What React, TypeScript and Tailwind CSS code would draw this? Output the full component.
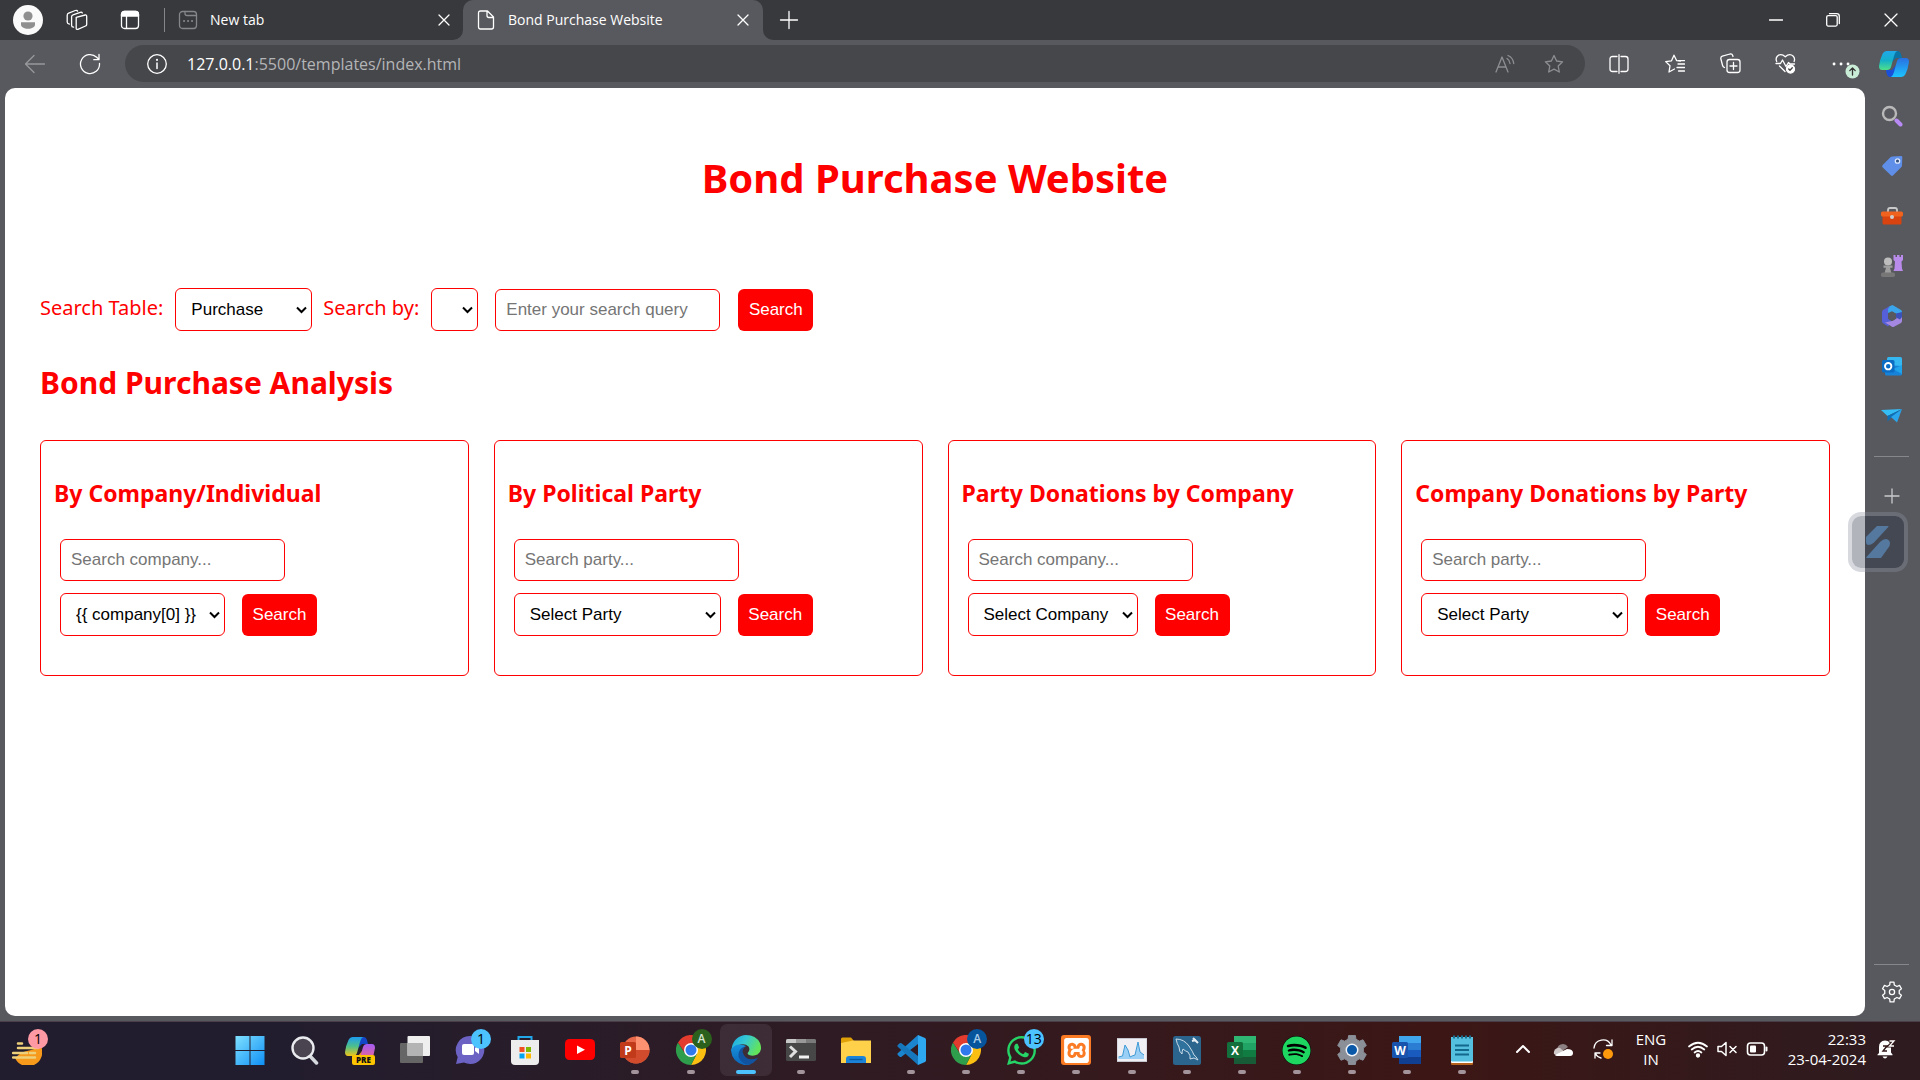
import type { ReactNode } from "react";
import { FaWhatsapp, FaSpotify } from "react-icons/fa";
import { SiXampp } from "react-icons/si";

const UI = "font-['Open_Sans','Noto_Sans',sans-serif]";
const PAGE = "font-['Noto_Sans',sans-serif]";
const CONTROL = "font-['Liberation_Sans',Arial,sans-serif] text-[17px]";

type IconProps = { size?: number; box?: string; children: ReactNode; className?: string };

function Svg({ size = 20, box = "0 0 20 20", children, className = "" }: IconProps) {
  return (
    <svg
      width={size}
      height={size}
      viewBox={box}
      fill="none"
      stroke="currentColor"
      strokeWidth="1.3"
      strokeLinecap="round"
      strokeLinejoin="round"
      className={`shrink-0 ${className}`}
      aria-hidden="true"
    >
      {children}
    </svg>
  );
}

function Flat({ size = 30, box = "0 0 30 30", children }: IconProps) {
  return (
    <svg width={size} height={size} viewBox={box} className="shrink-0" aria-hidden="true">
      {children}
    </svg>
  );
}

function gearPath(c: number, outer: number, inner: number, teeth: number, wide: number) {
  const step = (Math.PI * 2) / teeth;
  const points: string[] = [];
  for (let i = 0; i < teeth; i++) {
    const a = i * step - Math.PI / 2;
    const corners: [number, number][] = [
      [a - step * wide, inner],
      [a - step * wide * 0.62, outer],
      [a + step * wide * 0.62, outer],
      [a + step * wide, inner],
    ];
    corners.forEach(([t, r]) => points.push(`${(c + r * Math.cos(t)).toFixed(2)} ${(c + r * Math.sin(t)).toFixed(2)}`));
  }
  return `M${points.join("L")}Z`;
}

/* ---------- Title bar ---------- */

function CloseGlyph() {
  return (
    <Svg size={12} box="0 0 12 12">
      <path d="M1 1l10 10M11 1L1 11" />
    </Svg>
  );
}

function TitleBar() {
  return (
    <header className={`flex h-10 shrink-0 text-white ${UI}`}>
      <div className="flex w-[463px] shrink-0 items-center rounded-br-[10px] bg-[#38393d]">
        <button aria-label="Profile" className="flex w-14 justify-center">
          <Flat>
            <circle cx="15" cy="15" r="15" fill="#fafafa" />
            <circle cx="15" cy="11" r="4.6" fill="#8f8f8f" />
            <path d="M8 17.2h14v2.3c0 2.6-3 4.2-7 4.2s-7-1.6-7-4.2z" fill="#8f8f8f" />
          </Flat>
        </button>
        <button aria-label="Workspaces" className="flex w-[42px] justify-center">
          <Svg size={22} box="0 0 22 22">
            <path d="M10.200 8.300l9-2.300q1.500-.3 1.500 1.200v8.200q0 1.200-1.200 1.600l-7.600 3.300q-1.700.6-1.700-1.100z" />
            <path d="M7.600 18.200q-2-.3-2-1.800V7.800q0-1.500 1.400-1.900l7.300-2.600q1.500-.5 2 .7" />
            <path d="M3.400 15.200Q1.200 14.600 1.200 13V6.400q0-1.600 1.500-2.200l6.600-2.700q1.700-.6 2.300.6" />
          </Svg>
        </button>
        <button aria-label="Tab actions" className="flex w-16 justify-center">
          <Svg>
            <rect x="1.500" y="1.500" width="17" height="17" rx="3" />
            <path d="M1.500 6V4.500q0-3 3-3h11q3 0 3 3V6z" fill="currentColor" />
            <path d="M6.500 6v12" />
          </Svg>
        </button>
        <span className="mx-0.5 h-6 w-px bg-[#85868a]" />
        <div className="flex flex-1 items-center pr-[11px] pl-[11px]">
          <Svg size={20} className="text-[#85868a]">
            <rect x="1.500" y="1.500" width="17" height="17" rx="3" />
            <path d="M7 1.500v2q0 2 2 2h9.500" />
            <path d="M6 11h.1M10 11h.1M14 11h.1" strokeWidth="2" />
          </Svg>
          <span className="ml-3 flex-1 text-sm leading-5">New tab</span>
          <button aria-label="Close New tab" className="p-0.5">
            <CloseGlyph />
          </button>
        </div>
      </div>
      <div className="w-[300px] shrink-0 bg-[#38393d]">
        <div className="flex h-full items-center rounded-t-[10px] bg-[#58595e] pr-3 pl-[13px]">
          <Svg size={20}>
            <path d="M2.500 3q0-2 2-2h7l6 6v10q0 2-2 2h-11q-2 0-2-2zM11 1v4.500q0 2 2 2h4.500" />
          </Svg>
          <span className="ml-3 flex-1 text-sm leading-5">Bond Purchase Website</span>
          <button aria-label="Close Bond Purchase Website" className="p-0.5">
            <CloseGlyph />
          </button>
        </div>
      </div>
      <div className="flex flex-1 items-center justify-between rounded-bl-[10px] bg-[#38393d] pl-4">
        <button aria-label="Open new tab">
          <Svg size={20}>
            <path d="M10 1.500v17M1.500 10h17" />
          </Svg>
        </button>
        <div className="flex">
          <button aria-label="Minimize" className="flex w-14 justify-center">
            <Svg size={14} box="0 0 14 14">
              <path d="M.5 7h13" />
            </Svg>
          </button>
          <button aria-label="Restore" className="flex w-[58px] justify-center">
            <Svg size={14} box="0 0 14 14">
              <rect x=".7" y="2.600" width="10.500" height="10.500" rx="1.500" />
              <path d="M3.500.7h7.300q2.500 0 2.500 2.500v7.300" />
            </Svg>
          </button>
          <button aria-label="Close window" className="flex w-[58px] justify-center">
            <Svg size={14} box="0 0 14 14">
              <path d="M1 1l12 12M13 1L1 13" />
            </Svg>
          </button>
        </div>
      </div>
    </header>
  );
}

/* ---------- Toolbar ---------- */

function Copilot({ pre = false }: { pre?: boolean }) {
  const id = pre ? "pre" : "bar";
  return (
    <Flat>
      <defs>
        <linearGradient id={`${id}-a`} x1="0" y1="0" x2="0" y2="1">
          <stop offset="0" stopColor={pre ? "#1b9df0" : "#20a8ea"} />
          <stop offset=".5" stopColor={pre ? "#4fc08a" : "#15b0c8"} />
          <stop offset="1" stopColor={pre ? "#f0c419" : "#4fe08a"} />
        </linearGradient>
        <linearGradient id={`${id}-b`} x1="0" y1="0" x2="0" y2="1">
          <stop offset="0" stopColor={pre ? "#a35cf5" : "#2a6fe0"} />
          <stop offset="1" stopColor={pre ? "#ff6a78" : "#1cc4ff"} />
        </linearGradient>
      </defs>
      <path d="M14 2h5q2 0 3 3l1 4h-6l-4 4z" fill={pre ? "#1446c8" : "#0a74a6"} />
      <path d="M16 28h-5q-2.500 0-3.500-4L7 21h6l4-5z" fill={pre ? "#f78b2c" : "#1a50d8"} />
      <path d="M8 2h10q-2 1-3 5l-3 11q-1 3-4 3H3q-3 0-3-4 1-7 3.500-12Q5 2 8 2z" fill={`url(#${id}-a)`} />
      <path d="M22 28H12q2-1 3-5l3-11q1-3 4-3h5q3 0 3 4-1 7-3.500 12Q25 28 22 28z" fill={`url(#${id}-b)`} />
      {pre && (
        <>
          <rect x="7" y="20" width="23" height="10" rx="2" fill="#fdc500" />
          <text x="18.500" y="28" textAnchor="middle" fontSize="8" fontWeight="800" fontFamily="Open Sans" fill="#111">
            PRE
          </text>
        </>
      )}
    </Flat>
  );
}

const STAR = "M10 1.500l2.600 5.500 6 .8-4.400 4.200 1.100 6-5.300-2.900-5.300 2.900 1.100-6L1.400 7.800l6-.8z";

function Toolbar() {
  return (
    <div className={`flex shrink-0 items-start pt-[5px] pb-1.5 text-white ${UI}`}>
      <div className="flex h-[37px] w-[125px] shrink-0 items-center pl-6">
        <button aria-label="Back" className="text-[#97989b]">
          <Svg size={22} box="0 0 22 22">
            <path d="M20.500 11H2M10 2.500L1.500 11l8.500 8.500" />
          </Svg>
        </button>
        <button aria-label="Refresh" className="ml-[33px]">
          <Svg size={22} box="0 0 22 22">
            <path d="M20.500 10.500A9.500 9.500 0 1 1 17.700 4.300l2.300 2.300M20 1.500v5.200h-5.200" />
          </Svg>
        </button>
      </div>
      <div className="flex h-[37px] flex-1 items-center rounded-full bg-[#46474b] pr-[21px] pl-[22px]">
        <button aria-label="Site information">
          <Svg size={20}>
            <circle cx="10" cy="10" r="9.300" />
            <path d="M10 9v5.500" strokeWidth="1.500" />
            <path d="M10 5.800v.1" strokeWidth="2" />
          </Svg>
        </button>
        <div className="ml-5 flex-1 text-base leading-6">
          <span className="text-white">127.0.0.1</span>
          <span className="text-[#b4b5b7]">:5500/templates/index.html</span>
        </div>
        <div className="flex items-center gap-[29px] text-[#8e8f92]">
          <button aria-label="Read aloud">
            <Svg size={20}>
              <path d="M1 18L7 3l6 15M3 13h8M12 4.500q2.500 1.500 3 5M13 1.500q5 2 5.700 8" />
            </Svg>
          </button>
          <button aria-label="Add to favorites">
            <Svg size={20}>
              <path d={STAR} />
            </Svg>
          </button>
        </div>
      </div>
      <div className="flex h-[37px] w-[335px] shrink-0 items-center pl-1.5">
        <button aria-label="Split screen" className="flex w-14 justify-center">
          <Svg size={20}>
            <path d="M8 2.500H3.500q-2.500 0-2.500 2.500v10q0 2.500 2.500 2.500H8M12 2.500h4.500Q19 2.500 19 5v10q0 2.500-2.500 2.500H12M10 .7v18.600" />
          </Svg>
        </button>
        <button aria-label="Favorites" className="flex w-14 justify-center">
          <Svg size={20}>
            <path d="M15.500 7L11.700 6.700 9 1.200 6.500 6.800.7 7.600 5 11.800l-1 6.200 5.500-3M13 10h6.500M12 13.500h7.500M13 6.600h6.500M13.500 17h6" />
          </Svg>
        </button>
        <button aria-label="Collections" className="flex w-[55px] justify-center">
          <Svg size={21} box="0 0 21 21">
            <rect x="7" y="6.500" width="13" height="13" rx="2.500" />
            <path d="M13.500 9.500v7M10 13h7M4.500 14.500Q3 14 2.600 12.500L.9 6Q.4 4 2.300 3.200L10 1q2-.5 2.600 1.300l.4 1.200" />
          </Svg>
        </button>
        <button aria-label="Browser essentials" className="flex w-[55px] justify-center">
          <Svg size={21} box="0 0 21 21">
            <path d="M1.700 8.500Q.3 5.500 2.300 3.200q3.700-3.500 8 .5 4.300-4 8-.5 2 2.300.8 5.300M1 10.500h4.500l2-3.500 3.500 6.500 2.500-4 1.500 1.500h4.500M4.500 13l5.500 5.500" />
            <circle cx="15.500" cy="16" r="4" fill="currentColor" />
            <path d="M13.700 16l1.300 1.300 2.300-2.500" stroke="#444" />
          </Svg>
        </button>
        <button aria-label="Settings and more, update available" className="relative flex w-[55px] justify-center">
          <Svg size={20}>
            <path d="M3 10h.1M10 10h.1M17 10h.1" strokeWidth="2.800" />
          </Svg>
          <span className="absolute top-2.5 left-8">
            <Svg size={15} box="0 0 15 15">
              <circle cx="7.500" cy="7.500" r="7" fill="#c9ecd7" stroke="none" />
              <path d="M7.500 11V4M4.800 6.600L7.500 4l2.700 2.600" stroke="#333" />
            </Svg>
          </span>
        </button>
        <button aria-label="Copilot" className="flex w-[52px] justify-center">
          <Copilot />
        </button>
      </div>
    </div>
  );
}

/* ---------- Web page ---------- */

function SearchButton() {
  return (
    <button className={`h-[42px] w-[75px] rounded-md bg-[#ff0000] text-white ${CONTROL}`}>Search</button>
  );
}

function Select({ id, width, options, label }: { id: string; width: string; options: string[]; label?: string }) {
  return (
    <span className={`relative inline-flex ${width}`}>
      <select
        id={id}
        aria-label={label}
        className={`h-[43px] w-full appearance-none rounded-md border border-[#ff0000] bg-white pl-[15px] text-black ${CONTROL}`}
      >
        {options.map((o) => (
          <option key={o}>{o}</option>
        ))}
      </select>
      <svg width="11" height="8" viewBox="0 0 11 8" className="pointer-events-none absolute top-[18px] right-[5px]" aria-hidden="true">
        <path d="M1 1.500l4.500 4.500L10 1.500" fill="none" stroke="#000" strokeWidth="2" />
      </svg>
    </span>
  );
}

function TextBox({ placeholder }: { placeholder: string }) {
  return (
    <input
      type="text"
      aria-label={placeholder}
      placeholder={placeholder}
      className={`h-[42px] w-[225px] rounded-md border border-[#ff0000] bg-white px-2.5 placeholder:text-[#757575] ${CONTROL}`}
    />
  );
}

const CARDS = [
  { title: "By Company/Individual", hint: "Search company...", option: "{{ company[0] }}", width: "w-[165px]" },
  { title: "By Political Party", hint: "Search party...", option: "Select Party", width: "w-[207px]" },
  { title: "Party Donations by Company", hint: "Search company...", option: "Select Company", width: "w-[170px]" },
  { title: "Company Donations by Party", hint: "Search party...", option: "Select Party", width: "w-[207px]" },
];

function BondPage() {
  return (
    <main className={`flex-1 rounded-[10px] bg-white px-[35px] pt-[63px] text-[#ff0000] ${PAGE}`}>
      <h1 className="text-center text-[40px] leading-[54px] font-bold">Bond Purchase Website</h1>
      <form className="mt-[83px] flex items-end" onSubmit={(e) => e.preventDefault()}>
        <label htmlFor="table" className="mb-[9px] text-xl leading-7">
          Search Table:
        </label>
        <span className="ml-3 flex">
          <Select id="table" width="w-[137px]" options={["Purchase", "Redemption"]} />
        </span>
        <label htmlFor="by" className="mb-[9px] ml-[11px] text-xl leading-7">
          Search by:
        </label>
        <span className="ml-3 flex">
          <Select id="by" width="w-[47px]" options={[""]} />
        </span>
        <span className="mr-[18px] ml-[17px] flex">
          <TextBox placeholder="Enter your search query" />
        </span>
        <SearchButton />
      </form>
      <h2 className="mt-8 text-[30px] leading-10 font-bold">Bond Purchase Analysis</h2>
      <div className="mt-[37px] grid grid-cols-4 gap-[25px]">
        {CARDS.map((c, i) => (
          <section key={c.title} className="rounded-md border border-[#ff0000] px-[13px] pt-[36px] pb-[39px]">
            <h3 className="text-[23px] leading-8 font-bold">{c.title}</h3>
            <form className="mt-[30px] ml-1.5 flex flex-col gap-3" onSubmit={(e) => e.preventDefault()}>
              <TextBox placeholder={c.hint} />
              <div className="flex items-end gap-[17px]">
                <Select id={`card-${i}`} label={c.title} width={c.width} options={[c.option]} />
                <SearchButton />
              </div>
            </form>
          </section>
        ))}
      </div>
    </main>
  );
}

/* ---------- Edge sidebar ---------- */

const SIDE: { name: string; art: ReactNode }[] = [
  {
    name: "Search",
    art: (
      <>
        <circle cx="8.500" cy="8.500" r="6.500" fill="none" stroke="#b9b9b9" strokeWidth="2.400" />
        <path d="M15.500 15.500l4 4" stroke="#b98af5" strokeWidth="4" strokeLinecap="round" />
      </>
    ),
  },
  {
    name: "Shopping",
    art: (
      <>
        <path d="M11.500 1.500L20 1q1.300 0 1.300 1.300l-.3 8.200q0 1-.8 1.800l-8 8q-1.200 1.200-2.400 0L1.700 12.500q-1.200-1.200 0-2.400l8-8q.8-.6 1.800-.6z" fill="#5f8fe8" />
        <circle cx="16.500" cy="6" r="2.200" fill="#33507f" stroke="#dce8ff" strokeWidth="1.300" />
      </>
    ),
  },
  {
    name: "Tools",
    art: (
      <>
        <path d="M7 7V5q0-2 2-2h5q2 0 2 2v2" fill="none" stroke="#c9c9c9" strokeWidth="1.800" />
        <rect x="1.500" y="10" width="19" height="9.500" rx="1.500" fill="#d8430f" />
        <rect x="0" y="6.500" width="22" height="5" rx="1.500" fill="#f0631e" />
        <circle cx="11" cy="12" r="2" fill="#cfcfcf" />
      </>
    ),
  },
  {
    name: "Games",
    art: (
      <>
        <path d="M12.500 0h2v2H16V0h2.500v2H20V0h2v5l-1.500 1.500.5 7 1 2.500h-9.500l1-2.500.5-7L12.500 5z" fill="#b98bea" />
        <circle cx="7" cy="6.500" r="4" fill="#bdbdbd" />
        <path d="M2.500 10.500h9v2.300H9l1.500 5.500h-7L5 12.800H2.500z" fill="#9e9e9e" />
        <rect x="0" y="17.500" width="14" height="4.500" rx="1.800" fill="#777" />
      </>
    ),
  },
  {
    name: "Microsoft 365",
    art: (
      <>
        <path d="M11.500 0L20 5q1 .7 1 2v5l-7-4-3-1.800L7 8V3q0-1 1-1.500z" fill="#3aa5ea" />
        <path d="M9 1L7 4v9.500l4 3-4 5-5-3.200Q1 17.500 1 16V7q0-1.200 1-2z" fill="#5560d8" />
        <path d="M21 12v4q0 1.200-1 2l-7 3.700q-1 .5-2 0L4 17.500l7-1.500 4-2.500V9z" fill="#a487e0" />
        <path d="M7.500 10v4l4 2 4-2.500V9.300l-4-2.300z" fill="#58595e" />
        <path d="M15 8.500l6-1.500v5l-2 2.500-4-2z" fill="#3d52b8" />
      </>
    ),
  },
  {
    name: "Outlook",
    art: (
      <>
        <rect x="6" y="2" width="15" height="14" rx="1.500" fill="#35b8f1" />
        <path d="M4 10l17 1v8q0 1.500-1.500 1.500h-14Q4 20.500 4 19z" fill="#1683d8" />
        <path d="M21 10v9l-9-5z" fill="#1fa3ea" />
        <rect x="1" y="5" width="12.500" height="12.500" rx="1.500" fill="#0b6cc4" />
        <circle cx="7.200" cy="11.200" r="3.200" fill="none" stroke="#fff" strokeWidth="1.900" />
      </>
    ),
  },
  {
    name: "Drop",
    art: (
      <>
        <path d="M0 5l21-1L6.500 11z" fill="#35bdf5" />
        <path d="M21 4L6.500 11v5.500L10 13z" fill="#0c6fb8" />
        <path d="M21 4L10 12l6 5.500z" fill="#2aa4ea" />
      </>
    ),
  },
];

function Sidebar() {
  return (
    <nav aria-label="Sidebar" className="flex w-[55px] shrink-0 flex-col items-center pt-[3px] pr-0.5 text-[#c9cacc]">
      {SIDE.map((s) => (
        <button key={s.name} aria-label={s.name} className="flex h-[50px] items-center">
          <Flat size={22} box="0 0 22 22">
            {s.art}
          </Flat>
        </button>
      ))}
      <span className="mt-[15px] h-px w-[35px] bg-[#86878b]" />
      <button aria-label="Customize" className="mt-[31px]">
        <Svg size={16} box="0 0 16 16">
          <path d="M8 1v14M1 8h14" />
        </Svg>
      </button>
      <span className="mt-auto h-px w-[35px] bg-[#86878b]" />
      <button aria-label="Sidebar settings" className="mt-4 mb-[13px] text-white">
        <Svg size={22} box="0 0 22 22">
          <path d={gearPath(11, 10, 7.4, 6, 0.3)} />
          <circle cx="11" cy="11" r="2.600" />
        </Svg>
      </button>
    </nav>
  );
}

function FloatingCapture() {
  return (
    <button
      aria-label="Screen capture"
      className="absolute top-[424px] right-3 flex size-[60px] items-center justify-center rounded-[13px] border-4 border-[#8c91a0]/35 bg-[#20283c]/35 bg-clip-padding"
    >
      <Flat size={36} box="0 0 36 36">
        <path d="M17 2h11q1 0 .3 1L14 18.500Q11 21 8 21q-2-.5-2-3v-5z" fill="#55789f" />
        <path d="M21 34H7q-1.500 0-.5-1L20 18q3-3 6-3 4 .5 4 4.500 0 2-1.500 4z" fill="#55789f" />
      </Flat>
    </button>
  );
}

/* ---------- Taskbar ---------- */

function Chrome() {
  return (
    <Flat>
      <path d="M15 8h13.300A15 15 0 0 1 15 30l6-11.500z" fill="#fbbf12" />
      <path d="M15 30A15 15 0 0 1 2 7.500l7 11 6 3.500z" fill="#2f9e4c" />
      <path d="M15 30l6-11.500-6 3.500-4 1z" fill="#2f9e4c" />
      <path d="M2 7.500A15 15 0 0 1 28.300 8H15L9 18z" fill="#e33b2e" />
      <circle cx="15" cy="15" r="7" fill="#fff" />
      <circle cx="15" cy="15" r="5.500" fill="#3079ec" />
    </Flat>
  );
}

function Office({ letter, dark, tones }: { letter: string; dark: string; tones: [string, string, string, string] }) {
  return (
    <Flat>
      <rect x="7" y="1" width="22" height="7" fill={tones[0]} />
      <rect x="7" y="8" width="22" height="7" fill={tones[1]} />
      <rect x="7" y="15" width="22" height="7" fill={tones[2]} />
      <rect x="7" y="22" width="22" height="7" fill={tones[3]} />
      <rect x="0" y="7" width="16" height="16" rx="1.500" fill={dark} />
      <text x="8" y="19.500" textAnchor="middle" fontSize="12" fontWeight="700" fontFamily="Open Sans" fill="#fff">
        {letter}
      </text>
    </Flat>
  );
}

type App = { name: string; art: ReactNode; badge?: string; tone?: string; open?: boolean; active?: boolean };

const APPS: App[] = [
  {
    name: "Start",
    art: (
      <Flat>
        <defs>
          <linearGradient id="win" x1="0" y1="0" x2="1" y2="1">
            <stop offset="0" stopColor="#7fe0ff" />
            <stop offset="1" stopColor="#0f8ff5" />
          </linearGradient>
        </defs>
        <path d="M.5 1h14v14h-14zM15.500 1h14v14h-14zM.5 16h14v14h-14zM15.500 16h14v14h-14z" fill="url(#win)" />
      </Flat>
    ),
  },
  {
    name: "Search",
    art: (
      <Flat>
        <path d="M20 21l6.500 7" stroke="#d5d8dc" strokeWidth="3.500" strokeLinecap="round" />
        <circle cx="13" cy="13" r="10.500" fill="#4a4450" stroke="#e9ebee" strokeWidth="2.400" />
      </Flat>
    ),
  },
  { name: "Copilot preview", art: <Copilot pre /> },
  {
    name: "Task view",
    art: (
      <Flat>
        <rect x="0" y="8" width="23" height="20" rx="1" fill="#666" />
        <rect x="7.500" y="1" width="22.500" height="20" rx="1" fill="#efefef" />
        <path d="M7.500 8H23v13H7.500z" fill="#b4b4b4" />
      </Flat>
    ),
  },
  {
    name: "Chat",
    badge: "1",
    art: (
      <Flat>
        <path d="M15 1a14 14 0 1 1-6 26.500L1 29l1.700-7A14 14 0 0 1 15 1z" fill="#6b62c4" />
        <rect x="7" y="9" width="12" height="11" rx="2" fill="#fff" />
        <path d="M20 13l4-3v9l-4-3z" fill="#fff" />
      </Flat>
    ),
  },
  {
    name: "Microsoft Store",
    art: (
      <Flat>
        <path d="M8.500 6V2h13v4" fill="none" stroke="#22a7ea" strokeWidth="2" />
        <path d="M1 5h28v21q0 4-4 4H5q-4 0-4-4z" fill="#ededed" />
        <path d="M9.500 12h5v5h-5z" fill="#f25022" />
        <path d="M16 12h5v5h-5z" fill="#7fba00" />
        <path d="M9.500 18.500h5v5h-5z" fill="#00a4ef" />
        <path d="M16 18.500h5v5h-5z" fill="#ffb900" />
      </Flat>
    ),
  },
  {
    name: "YouTube",
    art: (
      <Flat>
        <rect x="0" y="4" width="30" height="21" rx="4.500" fill="#f00" />
        <path d="M12 10.500l8 4.300-8 4.300z" fill="#fff" />
      </Flat>
    ),
  },
  {
    name: "PowerPoint",
    open: true,
    art: (
      <Flat>
        <circle cx="16" cy="15" r="13.500" fill="#e8694a" />
        <path d="M16 1.500A13.500 13.500 0 0 1 29.500 15H16z" fill="#ff9270" />
        <path d="M2.500 15h27A13.500 13.500 0 0 1 2.500 15z" fill="#d14b2c" />
        <rect x="0" y="7" width="16" height="16" rx="1.500" fill="#c13b1b" />
        <text x="8" y="19.500" textAnchor="middle" fontSize="12" fontWeight="700" fontFamily="Open Sans" fill="#fff">
          P
        </text>
      </Flat>
    ),
  },
  { name: "Chrome", open: true, badge: "A", tone: "bg-[#2b611d] text-[#d5e6d0]", art: <Chrome /> },
  {
    name: "Edge",
    open: true,
    active: true,
    art: (
      <Flat>
        <defs>
          <linearGradient id="edge-a" x1="0" y1="0" x2="1" y2=".4">
            <stop offset="0" stopColor="#1aa5e0" />
            <stop offset=".5" stopColor="#35c9d4" />
            <stop offset="1" stopColor="#62e35c" />
          </linearGradient>
          <linearGradient id="edge-b" x1="0" y1="0" x2="0" y2="1">
            <stop offset="0" stopColor="#1793dc" />
            <stop offset="1" stopColor="#0b64b8" />
          </linearGradient>
        </defs>
        <path d="M1 12A14.500 14.500 0 0 1 15 0q10 0 14 8 3 8-2.500 11.500-4 2-8.500.5-2-1-1-2.500 2.500-3 .5-6-3-3-8-2Q3 10.500 0 16z" fill="url(#edge-a)" />
        <path d="M0 15.500Q2 10 8.500 9.500q4 0 6.500 1.500-5 3-4.500 9 1.500 7 9 9.300Q16 30.500 13 30 1 27 0 15.500z" fill="url(#edge-b)" />
        <path d="M14 11.300q-4 4-1 9 4 6.500 14 2.500-4 6-10 7-7-1-9.500-8Q6.500 14 14 11.300z" fill="#1253a0" />
      </Flat>
    ),
  },
  {
    name: "Terminal",
    open: true,
    art: (
      <Flat>
        <rect x="0" y="4" width="30" height="22" rx="1.500" fill="#474747" />
        <path d="M0 8V5.500Q0 4 1.500 4H10v4z" fill="#c8c8c8" />
        <path d="M10 4h10v4H10z" fill="#989898" />
        <path d="M20 4h8.500Q30 4 30 5.500V8H20z" fill="#7a7a7a" />
        <path d="M4 11.500l5.500 5L4 22" fill="none" stroke="#e0e0e0" strokeWidth="3" />
        <path d="M13 20.500h10v3H13z" fill="#f2f2f2" />
      </Flat>
    ),
  },
  {
    name: "File Explorer",
    art: (
      <Flat>
        <path d="M0 4q0-1.500 1.500-1.500H10L13 6v4H0z" fill="#e0a108" />
        <path d="M0 8l12-2.500h18v22.500H0z" fill="#ffd04a" />
        <path d="M5 28v-4q0-3 3-3h14q3 0 3 3v4z" fill="#1b83d8" />
        <path d="M8.500 24.500h13" stroke="#0a5aa0" strokeWidth="1.300" />
      </Flat>
    ),
  },
  {
    name: "Visual Studio Code",
    open: true,
    art: (
      <Flat>
        <path d="M22 0l-20 18q-1.500 1 0 2.200l1.700 1.500q.8.500 1.800 0L22 9z" fill="#1b86cf" />
        <path d="M22 30L2 12q-1.500-1 0-2.200l1.700-1.500q.8-.5 1.800 0L22 21z" fill="#1677bd" />
        <path d="M22 0l7 3q1 .6 1 1.700v20.600q0 1.100-1 1.700l-7 3z" fill="#2fa8f2" />
      </Flat>
    ),
  },
  { name: "Chrome profile 2", open: true, badge: "A", tone: "bg-[#06549b] text-[#a9cbe8]", art: <Chrome /> },
  { name: "WhatsApp", open: true, badge: "13", art: <FaWhatsapp size={33} color="#25d366" /> },
  {
    name: "XAMPP",
    open: true,
    art: (
      <span className="flex size-[30px] items-center justify-center rounded-[3px] bg-[#fb7a24]">
        <SiXampp size={25} color="#ffffff" />
      </span>
    ),
  },
  {
    name: "Performance monitor",
    open: true,
    art: (
      <Flat>
        <rect x="0" y="3.500" width="30" height="23" fill="#f0f0f4" stroke="#c4c4cc" />
        <path d="M1.500 22l4-1 2.500-11 3 5 2 7 2-1 3-1 3-13 2 10 4 3v4h-25.500z" fill="#9ad0f5" />
        <path d="M1.500 22l4-1 2.500-11 3 5 2 7 2-1 3-1 3-13 2 10 4 3" fill="none" stroke="#3f9ad6" />
      </Flat>
    ),
  },
  {
    name: "MySQL Workbench",
    open: true,
    art: (
      <Flat>
        <rect x="1" y="1" width="28" height="29" rx="2.500" fill="#2b648c" />
        <path d="M4 4q8 0 13 7 4 6 5 9 2 1 4 5l-4-2-4 1q1-3-2-7-3-1-5-3-1 2-1 5-3-2-3-7Q5 9 4 4z" fill="#30729e" stroke="#c9dbe8" strokeWidth="1" />
        <path d="M21 3l5 5M20 6l4-1" stroke="#e6eef4" strokeWidth="2" />
      </Flat>
    ),
  },
  { name: "Excel", open: true, art: <Office letter="X" dark="#12703c" tones={["#2fb673", "#21a366", "#107c41", "#185c37"]} /> },
  {
    name: "Spotify",
    open: true,
    art: (
      <span className="flex rounded-full bg-black">
        <FaSpotify size={29} color="#1ed760" />
      </span>
    ),
  },
  {
    name: "Settings",
    open: true,
    art: (
      <Flat>
        <path d={gearPath(15, 15, 11.5, 6, 0.34)} fill="#8a8f98" stroke="#8a8f98" strokeLinejoin="round" />
        <circle cx="15" cy="15" r="6.500" fill="#f2f5f9" />
        <circle cx="15" cy="15" r="5" fill="#0a58a8" />
      </Flat>
    ),
  },
  { name: "Word", open: true, art: <Office letter="W" dark="#1853ae" tones={["#41a5ee", "#2b7cd3", "#185abd", "#103f91"]} /> },
  {
    name: "Notepad",
    open: true,
    art: (
      <Flat>
        <rect x="4" y="24" width="22" height="6" rx="1" fill="#b5611c" />
        <rect x="4" y="2" width="22" height="26" rx="1" fill="#fff" />
        <rect x="4" y="2" width="22" height="24.500" rx="1" fill="#55bfe0" />
        <path d="M8 10.500h14M8 15h14M8 19.500h14" stroke="#12698c" strokeWidth="1.800" />
        <path d="M7 .5v3M11 .5v3M15 .5v3M19 .5v3M23 .5v3" stroke="#1b6f90" strokeWidth="2" />
      </Flat>
    ),
  },
];

function Badge({ text, tone = "bg-[#4cc2ff] text-black" }: { text: string; tone?: string }) {
  const letter = text === "A";
  return (
    <span
      className={`absolute -top-1.5 -right-1.5 flex size-5 items-center justify-center rounded-full leading-5 ${
        letter ? "text-xs font-semibold" : "text-sm"
      } ${tone}`}
    >
      {text}
    </span>
  );
}

function Taskbar() {
  return (
    <footer
      className={`flex h-[59px] shrink-0 border-t border-[#4a3f48] bg-linear-to-r from-[#221d2e] from-15% via-[#3c1615] via-75% to-[#2d1b20] text-white ${UI}`}
    >
      <div className="flex w-[222px] shrink-0 items-start pt-[13px] pl-3">
        <button aria-label="Widgets" className="relative flex">
          <Flat>
            <path d="M29 11a14 14 0 0 1-26 12q6-6 12-7t14-5z" fill="#f79a1c" />
            <path d="M6 8.500h4M6 13h20M1 18h14M18 18h5M1 22.500h22" stroke="#efd07a" strokeWidth="2.500" strokeLinecap="round" />
          </Flat>
          <Badge text="1" tone="bg-[#ff99a4] text-black" />
        </button>
      </div>
      <div className="flex flex-1">
        {APPS.map((a) => (
          <div key={a.name} className="flex flex-1 justify-center pt-[3px]">
            <button
              aria-label={a.name}
              className={`flex h-[50px] w-[50px] flex-col items-center justify-between rounded-md pt-2.5 pb-px ${
                a.active ? "bg-white/8 ring-1 ring-white/8" : ""
              }`}
            >
              <span className="relative flex h-[30px] items-center justify-center">
                {a.art}
                {a.badge && <Badge text={a.badge} tone={a.tone} />}
              </span>
              {a.open && (
                <span className={`h-1 rounded-full ${a.active ? "w-5 bg-[#4cc2ff]" : "w-2 bg-[#a2949a]"}`} />
              )}
            </button>
          </div>
        ))}
      </div>
      <div className="flex w-[430px] shrink-0 items-center pb-1 pl-[25px]">
        <button aria-label="Show hidden icons" className="flex w-4 justify-center">
          <Svg size={16} box="0 0 16 16">
            <path d="M2 11l6-6 6 6" strokeWidth="2" />
          </Svg>
        </button>
        <button aria-label="OneDrive" className="ml-[21px]">
          <Flat size={22} box="0 0 22 22">
            <path d="M5 11a6 6 0 0 1 11-2l-7 5z" fill="#8d8082" />
            <path d="M2 16a5 5 0 0 1 6-6l8 7H4z" fill="#cfc8c9" />
            <path d="M3 17l12-6q6 0 6 4 0 3-3 3H5q-1.500 0-2-1z" fill="#fff" />
          </Flat>
        </button>
        <button aria-label="Update pending" className="ml-[18px]">
          <Svg size={22} box="0 0 22 22">
            <path d="M2 10a9 9 0 0 1 17-3M20 2v5.500h-5.500M3 20v-5h5M3 15q2 4 6 5" />
            <circle cx="16" cy="16" r="5" fill="#ff9a0c" stroke="none" />
          </Svg>
        </button>
        <button aria-label="Keyboard language" className="ml-2 w-[58px] text-center text-[15px] leading-5">
          ENG
          <br />
          IN
        </button>
        <button aria-label="Network, volume and battery" className="ml-2 flex items-center gap-[9px]">
          <Svg size={20}>
            <path d="M1 7.500q9-7.500 18 0M3.700 10.500q6.300-5.500 12.600 0M6.600 13.500q3.400-3 6.800 0" strokeWidth="1.700" />
            <circle cx="10" cy="16.500" r="1.500" fill="currentColor" />
          </Svg>
          <Svg size={20}>
            <path d="M1 7.500h3.500L9 3.500v13l-4.500-4H1zM13 7.500l6 6M19 7.500l-6 6" strokeWidth="1.500" />
          </Svg>
          <Svg size={22} box="0 0 22 22">
            <rect x="1.500" y="5" width="17" height="12" rx="3" strokeWidth="1.600" />
            <path d="M20.500 9.500v3" strokeWidth="2" />
            <rect x="4" y="7.500" width="6" height="7" rx="1" fill="currentColor" stroke="none" />
          </Svg>
        </button>
        <button aria-label="Clock" className="ml-auto text-right text-[15px] leading-5">
          22:33
          <br />
          23-04-2024
        </button>
        <button aria-label="Notifications" className="mr-6 ml-2.5">
          <Flat size={20} box="0 0 20 20">
            <path d="M3 14V8q0-6 6-6.500 6 .5 6 6v6l1.500 2v.8H1.500V15.500z" fill="#fff" />
            <path d="M6.500 17.500h5q-1 2-2.500 2t-2.500-2z" fill="#fff" />
            <path d="M7 7h4l-4 5h4" fill="none" stroke="#33191a" strokeWidth="1.400" />
            <path d="M13 2h5l-5 5h5" fill="none" stroke="#33191a" strokeWidth="3" />
            <path d="M13.500 2h4.500l-4.500 5H18" fill="none" stroke="#fff" strokeWidth="1.300" />
          </Flat>
        </button>
      </div>
    </footer>
  );
}

export default function App() {
  return (
    <div className="flex min-h-screen flex-col bg-[#58595e]">
      <TitleBar />
      <Toolbar />
      <div className="relative flex flex-1 pb-[5px] pl-[5px]">
        <BondPage />
        <Sidebar />
        <FloatingCapture />
      </div>
      <Taskbar />
    </div>
  );
}
